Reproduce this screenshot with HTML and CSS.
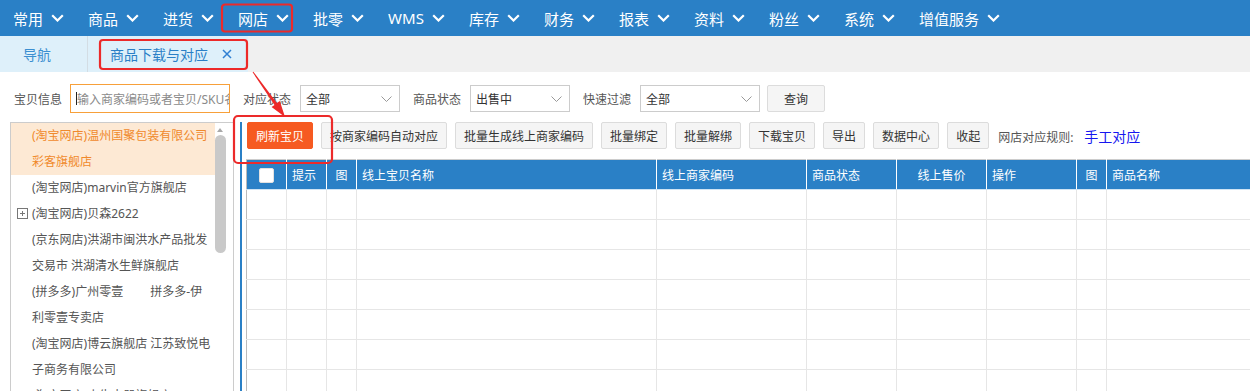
FILE: index.html
```html
<!DOCTYPE html>
<html lang="zh-CN">
<head>
  <meta charset="UTF-8">
  <title>商品下载与对应</title>
  <link rel="stylesheet" href="styles.css">
</head>
<body>
  <div class="topnav">
    <div class="nav-item">常用<svg class="chev" viewBox="0 0 13 8"><path d="M1.2 1.2l5.3 5.3 5.3-5.3"/></svg></div>
    <div class="nav-item">商品<svg class="chev" viewBox="0 0 13 8"><path d="M1.2 1.2l5.3 5.3 5.3-5.3"/></svg></div>
    <div class="nav-item">进货<svg class="chev" viewBox="0 0 13 8"><path d="M1.2 1.2l5.3 5.3 5.3-5.3"/></svg></div>
    <div class="nav-item">网店<svg class="chev" viewBox="0 0 13 8"><path d="M1.2 1.2l5.3 5.3 5.3-5.3"/></svg></div>
    <div class="nav-item">批零<svg class="chev" viewBox="0 0 13 8"><path d="M1.2 1.2l5.3 5.3 5.3-5.3"/></svg></div>
    <div class="nav-item">WMS<svg class="chev" viewBox="0 0 13 8"><path d="M1.2 1.2l5.3 5.3 5.3-5.3"/></svg></div>
    <div class="nav-item">库存<svg class="chev" viewBox="0 0 13 8"><path d="M1.2 1.2l5.3 5.3 5.3-5.3"/></svg></div>
    <div class="nav-item">财务<svg class="chev" viewBox="0 0 13 8"><path d="M1.2 1.2l5.3 5.3 5.3-5.3"/></svg></div>
    <div class="nav-item">报表<svg class="chev" viewBox="0 0 13 8"><path d="M1.2 1.2l5.3 5.3 5.3-5.3"/></svg></div>
    <div class="nav-item">资料<svg class="chev" viewBox="0 0 13 8"><path d="M1.2 1.2l5.3 5.3 5.3-5.3"/></svg></div>
    <div class="nav-item">粉丝<svg class="chev" viewBox="0 0 13 8"><path d="M1.2 1.2l5.3 5.3 5.3-5.3"/></svg></div>
    <div class="nav-item">系统<svg class="chev" viewBox="0 0 13 8"><path d="M1.2 1.2l5.3 5.3 5.3-5.3"/></svg></div>
    <div class="nav-item">增值服务<svg class="chev" viewBox="0 0 13 8"><path d="M1.2 1.2l5.3 5.3 5.3-5.3"/></svg></div>
  </div>

  <div class="tabs">
    <div class="tab tab-home">导航</div>
    <div class="tab tab-active">商品下载与对应<svg class="tab-close" viewBox="0 0 10 10"><path d="M1 1l8 8M9 1l-8 8"/></svg></div>
  </div>

  <div class="filter">
    <label>宝贝信息</label>
    <div class="search-box"><span class="caret"></span>输入商家编码或者宝贝/SKU名称</div>
    <label>对应状态</label>
    <div class="select w100"><span>全部</span><svg viewBox="0 0 11 6"><path d="M0.5 0.5l5 5 5-5"/></svg></div>
    <label>商品状态</label>
    <div class="select w100"><span>出售中</span><svg viewBox="0 0 11 6"><path d="M0.5 0.5l5 5 5-5"/></svg></div>
    <label>快速过滤</label>
    <div class="select w120"><span>全部</span><svg viewBox="0 0 11 6"><path d="M0.5 0.5l5 5 5-5"/></svg></div>
    <button class="btn btn-query">查询</button>
  </div>

  <div class="main">
    <div class="shop-list">
      <ul class="shops">
        <li class="active">(淘宝网店)温州国聚包装有限公司彩客旗舰店</li>
        <li>(淘宝网店)marvin官方旗舰店</li>
        <li><svg class="toggle" viewBox="0 0 11 11"><rect x="0.5" y="0.5" width="10" height="10"/><path d="M3 5.5h5M5.5 3v5"/></svg>(淘宝网店)贝森2622</li>
        <li>(京东网店)洪湖市闽洪水产品批发交易市 洪湖清水生鲜旗舰店</li>
        <li>(拼多多)广州零壹　　 拼多多-伊利零壹专卖店</li>
        <li>(淘宝网店)博云旗舰店 江苏致悦电子商务有限公司</li>
        <li>(淘宝网店)小牛电器旗舰店</li>
      </ul>
      <div class="scrollbar">
        <span class="scroll-up"></span>
        <span class="scroll-thumb"></span>
      </div>
    </div>

    <div class="panel">
      <div class="toolbar">
        <button class="btn btn-primary">刷新宝贝</button>
        <button class="btn">按商家编码自动对应</button>
        <button class="btn">批量生成线上商家编码</button>
        <button class="btn">批量绑定</button>
        <button class="btn">批量解绑</button>
        <button class="btn">下载宝贝</button>
        <button class="btn">导出</button>
        <button class="btn">数据中心</button>
        <button class="btn">收起</button>
        <span class="rule">网店对应规则:<a href="#">手工对应</a></span>
      </div>

      <table class="grid">
        <colgroup>
          <col class="c40"><col class="c40"><col class="c30"><col class="c300"><col class="c150">
          <col class="c90"><col class="c90"><col class="c90"><col class="c30"><col class="c290">
        </colgroup>
        <thead>
          <tr>
            <th class="center"><span class="check"></span></th>
            <th>提示</th>
            <th class="center">图</th>
            <th>线上宝贝名称</th>
            <th>线上商家编码</th>
            <th>商品状态</th>
            <th class="center">线上售价</th>
            <th>操作</th>
            <th class="center">图</th>
            <th>商品名称</th>
          </tr>
        </thead>
        <tbody>
          <tr><td></td><td></td><td></td><td></td><td></td><td></td><td></td><td></td><td></td><td></td></tr>
          <tr><td></td><td></td><td></td><td></td><td></td><td></td><td></td><td></td><td></td><td></td></tr>
          <tr><td></td><td></td><td></td><td></td><td></td><td></td><td></td><td></td><td></td><td></td></tr>
          <tr><td></td><td></td><td></td><td></td><td></td><td></td><td></td><td></td><td></td><td></td></tr>
          <tr><td></td><td></td><td></td><td></td><td></td><td></td><td></td><td></td><td></td><td></td></tr>
          <tr><td></td><td></td><td></td><td></td><td></td><td></td><td></td><td></td><td></td><td></td></tr>
          <tr><td></td><td></td><td></td><td></td><td></td><td></td><td></td><td></td><td></td><td></td></tr>
          <tr><td></td><td></td><td></td><td></td><td></td><td></td><td></td><td></td><td></td><td></td></tr>
        </tbody>
      </table>
    </div>
  </div>

  <!-- annotation marks drawn over the screenshot -->
  <svg class="marks" viewBox="0 0 1250 391">
    <rect x="222" y="4.5" width="70" height="27" rx="3"/>
    <rect x="100" y="40" width="147" height="29" rx="3"/>
    <rect x="234" y="116" width="98" height="47" rx="4"/>
    <polygon class="arrow" points="252.6,72.3 274.5,104.9 271.6,106.9 285,117 279.8,101.1 276.9,103.1 253.4,71.7"/>
  </svg>
</body>
</html>
```

FILE: styles.css
```css
* {
  box-sizing: border-box;
}

body {
  position: relative;
  width: 1250px;
  height: 391px;
  margin: 0;
  overflow: hidden;
  font-family: "Noto Sans", "Noto Sans CJK SC", sans-serif;
  font-size: 12px;
  color: #333;
  background-color: #fff;
}

/* top menu */
.topnav {
  display: flex;
  height: 36px;
  padding-left: 1px;
  background-color: #2a80c6;
}

.nav-item {
  display: flex;
  align-items: center;
  gap: 8px;
  padding: 0 12px;
  font-size: 15px;
  color: #fff;
}

.chev {
  width: 13px;
  height: 8px;
  fill: none;
  stroke: #fff;
  stroke-width: 2.2;
}

/* tab strip */
.tabs {
  display: flex;
  height: 36px;
  background-color: #f0f0f0;
}

.tab {
  display: flex;
  align-items: center;
  font-size: 14px;
  color: #2a7fc6;
  background-color: #def0fa;
}

.tab-home {
  width: 88px;
  padding-left: 23px;
  border-right: 1px solid #d3dde4;
  color: #3b8fd1;
}

.tab-active {
  width: 160px;
  padding-left: 22px;
}

.tab-close {
  width: 10px;
  height: 10px;
  margin-left: 14px;
  fill: none;
  stroke: #2f7fd2;
  stroke-width: 1.5;
}

/* filter row */
.filter {
  display: flex;
  align-items: center;
  height: 29px;
  margin-top: 12px;
  padding-left: 14px;
}

.filter label {
  margin: 0 9px 0 13px;
  color: #555;
}

.filter label:first-child {
  margin: 0 8px 0 0;
}

.search-box {
  display: flex;
  align-items: center;
  width: 160px;
  height: 29px;
  padding-left: 5px;
  border: 1px solid #f7a03a;
  color: #8a8a8a;
  white-space: nowrap;
  overflow: hidden;
}

.caret {
  flex: none;
  width: 1px;
  height: 13px;
  background-color: #222;
}

.select {
  display: flex;
  align-items: center;
  justify-content: space-between;
  height: 27px;
  padding: 0 7px 0 5px;
  border: 1px solid #ccc;
  color: #333;
}

.select svg {
  width: 11px;
  height: 6px;
  fill: none;
  stroke: #999;
  stroke-width: 1;
}

.w100 {
  width: 100px;
}

.w120 {
  width: 120px;
}

.btn {
  height: 27px;
  padding: 0 8px;
  border: 1px solid #dcdcdc;
  border-radius: 2px;
  background-color: #f5f5f5;
  color: #333;
  font: inherit;
  white-space: nowrap;
}

.btn-query {
  width: 58px;
  margin-left: 7px;
}

.btn-primary {
  border-color: #f65a21;
  background-color: #f65a21;
  color: #fff;
}

/* main area */
.main {
  display: flex;
  height: 320px;
  margin-top: 9px;
}

.shop-list {
  display: flex;
  width: 224px;
  margin-left: 10px;
  border: 1px solid #ccc;
}

.shops {
  width: 204px;
  margin: 0;
  padding: 0;
  list-style: none;
}

.shops li {
  padding: 0 2px 0 21px;
  line-height: 26px;
  color: #555;
}

.shops li.active {
  background-color: #fde9d4;
  color: #f0892c;
}

.toggle {
  width: 11px;
  height: 11px;
  margin: 0 4px 0 -15px;
  vertical-align: -1px;
  fill: none;
  stroke: #777;
  stroke-width: 1;
}

.scrollbar {
  display: flex;
  flex-direction: column;
  width: 18px;
}

.scroll-up {
  width: 0;
  height: 0;
  margin: 5px 0 0 2px;
  border-left: 3.5px solid transparent;
  border-right: 3.5px solid transparent;
  border-bottom: 4px solid #a9a9a9;
}

.scroll-thumb {
  width: 11px;
  height: 118px;
  margin-top: 3px;
  border-radius: 6px;
  background-color: #c9c9c9;
}

.panel {
  flex: 1;
  margin-left: 6px;
  padding-left: 4px;
  border-left: 2px solid #2a80c6;
  overflow: hidden;
}

.toolbar {
  display: flex;
  align-items: center;
  gap: 8px;
  padding-left: 1px;
}

.rule {
  margin-left: 1px;
  color: #555;
  white-space: nowrap;
}

.rule a {
  margin-left: 11px;
  font-size: 14px;
  color: #1616f0;
  text-decoration: none;
}

/* table */
.grid {
  width: 1150px;
  margin-top: 10px;
  border-collapse: collapse;
  table-layout: fixed;
  border-top: 1px solid #ccc;
  border-left: 1px solid #bbb;
}

.c30 { width: 30px; }
.c40 { width: 40px; }
.c90 { width: 90px; }
.c150 { width: 150px; }
.c290 { width: 290px; }
.c300 { width: 300px; }

.grid th {
  height: 30px;
  padding: 0 5px;
  border-right: 1px solid #fff;
  border-bottom: 1px solid #cfe4f4;
  background-color: #2a80c6;
  color: #fff;
  font-weight: normal;
  text-align: left;
}

.grid td {
  height: 30px;
  border-right: 1px solid #e6e6e6;
  border-bottom: 1px solid #e6e6e6;
}

.grid .center {
  text-align: center;
}

.check {
  display: inline-block;
  width: 15px;
  height: 15px;
  border: 1px solid #e2e2e2;
  border-radius: 2px;
  background-color: #fff;
  vertical-align: middle;
}

/* red annotation marks */
.marks {
  position: absolute;
  top: 0;
  left: 0;
  width: 1250px;
  height: 391px;
  pointer-events: none;
}

.marks rect {
  fill: none;
  stroke: #ec2a2a;
  stroke-width: 2.2;
}

.marks .arrow {
  fill: #ec2a2a;
}
```
